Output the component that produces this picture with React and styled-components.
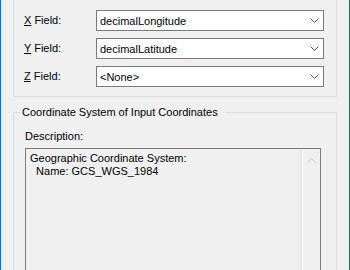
import React from 'react'
import styled, { createGlobalStyle } from 'styled-components';

const GlobalStyle = createGlobalStyle`
    body{
        margin: 0;
        background: #f0f0f0;
        font-family: "Liberation Sans", Arial, sans-serif;
        font-size: 11px;
        color: #000;
    }
`;

const fields = [
    {key: 'X', rest: ' Field:', value: 'decimalLongitude'},
    {key: 'Y', rest: ' Field:', value: 'decimalLatitude'},
    {key: 'Z', rest: ' Field:', value: '<None>'},
];

function Chevron({up, color}) {
    return (
        <svg width="9" height="5" viewBox="0 0 9 5">
            <polyline
                points={up ? "0.5,4.5 4.5,0.5 8.5,4.5" : "0.5,0.5 4.5,4.5 8.5,0.5"}
                fill="none"
                stroke={color}
                strokeWidth="1"
            />
        </svg>
    )
}

function App() {
    return (
        <WindowStyled>
            <GlobalStyle/>
            <FieldsGroup>
                {fields.map((f) => (
                    <React.Fragment key={f.key}>
                        <FieldLabel><u>{f.key}</u>{f.rest}</FieldLabel>
                        <Combo>
                            <span>{f.value}</span>
                            <Chevron color="#505050"/>
                        </Combo>
                    </React.Fragment>
                ))}
            </FieldsGroup>
            <CoordGroup>
                <legend>Coordinate System of Input Coordinates</legend>
                <GroupBody>
                    <DescLabel>Description:</DescLabel>
                    <ReadOnlyBox>
                        <BoxText>{"Geographic Coordinate System:\n  Name: GCS_WGS_1984"}</BoxText>
                        <ScrollTrack>
                            <Chevron up color="#c4c4c4"/>
                        </ScrollTrack>
                    </ReadOnlyBox>
                </GroupBody>
            </CoordGroup>
        </WindowStyled>
    )
}

const WindowStyled = styled.div`
    width: 350px;
    height: 270px;
    box-sizing: border-box;
    border-left: 1px solid #0078d7;
    border-right: 1px solid #0078d7;
    background: #f0f0f0;
    overflow: hidden;
`;

const FieldsGroup = styled.div`
    margin: 0 12px;
    border: 1px solid #dcdcdc;
    border-top: none;
    padding: 10px 12px 9px 10px;
    display: grid;
    grid-template-columns: 72px 1fr;
    row-gap: 7px;
    align-items: center;
`;

const FieldLabel = styled.label`
    line-height: 13px;
    u{
        text-decoration: underline;
        text-underline-offset: 1px;
    }
`;

const Combo = styled.div`
    height: 21px;
    box-sizing: border-box;
    border: 1px solid #7a7a7a;
    background: #fff;
    display: flex;
    align-items: center;
    justify-content: space-between;
    padding: 0 4px 0 3px;
`;

const CoordGroup = styled.fieldset`
    margin: 9px 12px 0;
    padding: 0;
    border: 1px solid #dcdcdc;
    min-width: 0;
    legend{
        margin-left: 6px;
        padding: 0 7px 0 2px;
        line-height: 13px;
    }
`;

const GroupBody = styled.div`
    padding: 11px 15px 0 11px;
    display: flex;
    flex-direction: column;
`;

const DescLabel = styled.div`
    line-height: 13px;
    margin-bottom: 5px;
`;

const ReadOnlyBox = styled.div`
    height: 140px;
    border: 1px solid #7a7a7a;
    display: flex;
`;

const BoxText = styled.div`
    flex: 1;
    white-space: pre;
    line-height: 13px;
    padding: 3px 4px;
`;

const ScrollTrack = styled.div`
    width: 17px;
    border-left: 1px solid #fff;
    box-shadow: -2px 0 0 #e6e6e6;
    display: flex;
    justify-content: center;
    align-items: flex-start;
    padding-top: 9px;
`;

export default App
